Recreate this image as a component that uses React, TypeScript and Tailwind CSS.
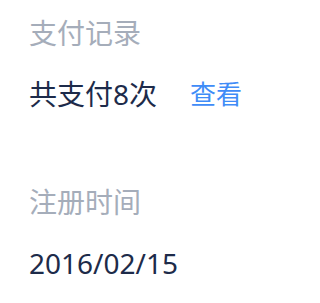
import React from "react";

const FONT = "font-['Noto_Sans','Noto_Sans_CJK_SC',sans-serif]";

const InfoItem = ({ label, children }: { label: string; children: React.ReactNode }) => (
  <div>
    <div className="h-10 text-[28px] leading-10 text-[#a5adba]">{label}</div>
    <div className="mt-[21px] flex h-10 items-center text-[28px] leading-10 text-[#1d2b4a]">
      {children}
    </div>
  </div>
);

const App = () => {
  return (
    <div className={`h-[303px] w-[295px] bg-white pl-[29px] pt-[13px] ${FONT}`}>
      {/* 支付记录 */}
      <InfoItem label="支付记录">
        <span>共支付8次</span>
        <a className="ml-[33px] text-[26px] text-[#3f8cf7]" href="#">
          查看
        </a>
      </InfoItem>

      {/* 注册时间 */}
      <div className="mt-[68px]">
        <InfoItem label="注册时间">
          <span>2016/02/15</span>
        </InfoItem>
      </div>
    </div>
  );
};

export default App;
